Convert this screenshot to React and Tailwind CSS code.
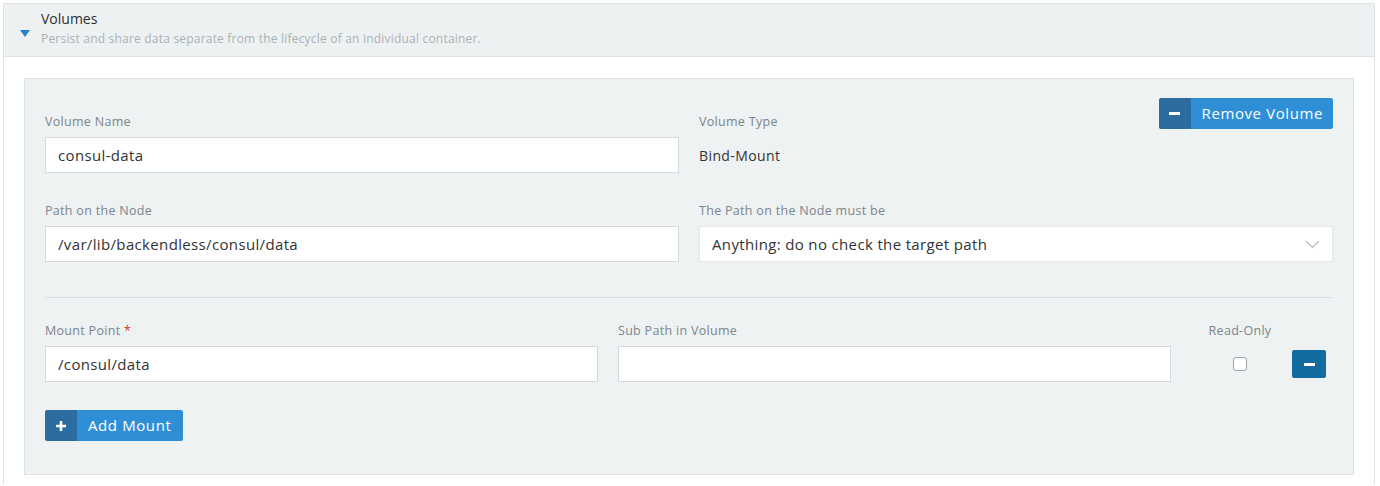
import React from 'react';

const font = { fontFamily: '"Open Sans", "Liberation Sans", sans-serif' };

function Label({ children, required }) {
    return (
        <div className="text-[12.5px] leading-[18px] tracking-[0.3px] text-[#7b858b] mb-[6px]">
            {children}
            {required && <span className="text-[#e0352b]"> *</span>}
        </div>
    );
}

function TextInput({ value }) {
    return (
        <div className="h-9 bg-white border border-[#d5dcdf] px-3 flex items-center text-[15px] tracking-[0.35px] text-[#333]">
            {value}
        </div>
    );
}

function IconButton({ icon, children, wide }) {
    return (
        <button className="flex h-[31px] rounded-[2px] overflow-hidden text-white text-[15px] tracking-[0.6px]">
            <span className="w-[32px] bg-[#2b6da1] flex items-center justify-center">{icon}</span>
            <span className={wide ? 'bg-[#2e8fd7] flex items-center pl-[11px] pr-[12px]' : 'bg-[#2e8fd7] flex items-center pl-[11px] pr-[10px]'}>{children}</span>
        </button>
    );
}

const Minus = () => <span className="block w-[11px] h-[3px] bg-white" />;
const Plus = () => (
    <svg width="12" height="12" viewBox="0 0 12 12"><path d="M6 1v10M1 6h10" stroke="white" strokeWidth="2.6" /></svg>
);

export default function App() {
    return (
        <div className="bg-white min-h-[486px] pt-[3px] pl-[3px] pr-[5px]" style={font}>
            <div className="border-x border-t border-[#dde2e4]">
                <div className="bg-[#eef1f2] border-b border-[#dde2e4] h-[53px] flex items-center pl-4">
                    <svg width="10" height="7" viewBox="0 0 10 7" className="mt-[6px]">
                        <path d="M0 0h10L5 7z" fill="#2b7fcd" />
                    </svg>
                    <div className="ml-[11px] -mt-[4px]">
                        <div className="text-[14px] leading-5 text-[#2b2f31]">Volumes</div>
                        <div className="text-[12px] leading-4 tracking-[0.2px] text-[#a9b1b6] mt-[2px]">
                            Persist and share data separate from the lifecycle of an individual container.
                        </div>
                    </div>
                </div>
                <div className="px-5 pt-[21px] pb-[10px]">
                    <div className="bg-[#eef2f3] border border-[#dce1e3] pt-[19px] px-5 pb-[33px]">
                        <div className="grid grid-cols-2 gap-x-5">
                            <div className="pt-[15px]">
                                <Label>Volume Name</Label>
                                <TextInput value="consul-data" />
                            </div>
                            <div className="flex justify-between">
                                <div className="pt-[15px]">
                                    <Label>Volume Type</Label>
                                    <div className="h-9 flex items-center text-[14px] tracking-[0.4px] text-[#333]">Bind-Mount</div>
                                </div>
                                <div>
                                    <IconButton icon={<Minus />}>Remove Volume</IconButton>
                                </div>
                            </div>
                            <div className="pt-[29px]">
                                <Label>Path on the Node</Label>
                                <TextInput value="/var/lib/backendless/consul/data" />
                            </div>
                            <div className="pt-[29px]">
                                <Label>The Path on the Node must be</Label>
                                <div className="h-9 bg-white border border-[#e4e9eb] pl-3 pr-3 flex items-center justify-between text-[15px] tracking-[0.35px] text-[#333] mt-px">
                                    <span>Anything: do no check the target path</span>
                                    <svg width="15" height="9" viewBox="0 0 15 9">
                                        <path d="M1 1l6.5 6.5L14 1" fill="none" stroke="#b3b9bc" strokeWidth="1.2" />
                                    </svg>
                                </div>
                            </div>
                        </div>

                        <div className="h-px bg-[#d8dee1] mt-[35px] mb-[24px]" />

                        <div className="flex items-start">
                            <div className="flex-1">
                                <Label required>Mount Point</Label>
                                <TextInput value="/consul/data" />
                            </div>
                            <div className="flex-1 ml-5">
                                <Label>Sub Path in Volume</Label>
                                <TextInput value="" />
                            </div>
                            <div className="w-[98px] ml-5 flex flex-col items-center">
                                <Label>Read-Only</Label>
                                <div className="h-9 flex items-center">
                                    <span className="block w-[14px] h-[14px] bg-white border border-[#9aa1a6] rounded-[3px]" />
                                </div>
                            </div>
                            <div className="ml-[3px] mr-[7px] pt-[28px]">
                                <button className="w-[34px] h-[28px] bg-[#146b9f] rounded-[2px] flex items-center justify-center">
                                    <Minus />
                                </button>
                            </div>
                        </div>

                        <div className="mt-[28px]">
                            <IconButton icon={<Plus />} wide>Add Mount</IconButton>
                        </div>
                    </div>
                </div>
            </div>
        </div>
    );
}
